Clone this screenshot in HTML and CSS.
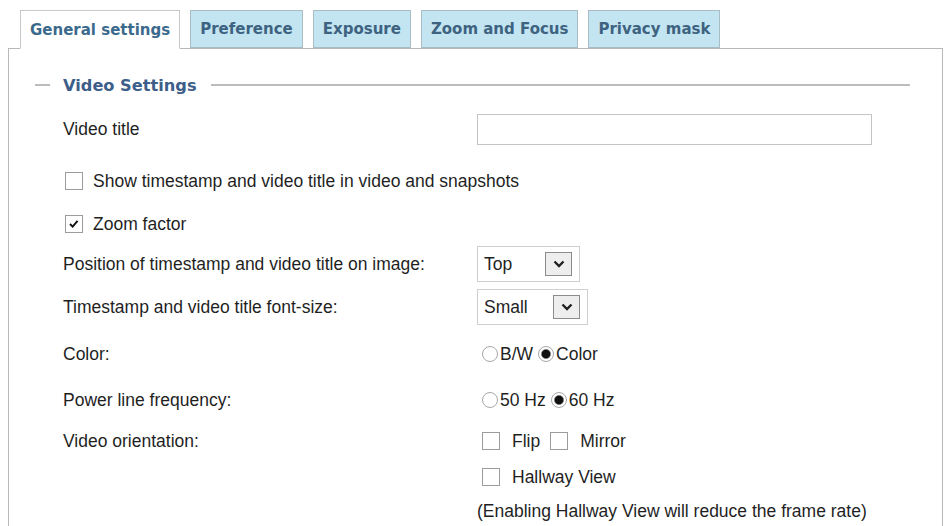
FILE: index.html
```html
<!DOCTYPE html>
<html>
<head>
<meta charset="utf-8">
<link rel="stylesheet" href="styles.css">
</head>
<body>
<div class="page">
  <div class="tabs">
    <div class="tab active">General settings</div>
    <div class="tab">Preference</div>
    <div class="tab">Exposure</div>
    <div class="tab">Zoom and Focus</div>
    <div class="tab">Privacy mask</div>
  </div>
  <div class="panel">
    <div class="legend">
      <span class="dash"></span>
      <span class="legend-text">Video Settings</span>
      <span class="rule"></span>
    </div>
    <div class="form">
      <div class="row row-title">
        <span class="label">Video title</span>
        <div class="textbox"></div>
      </div>
      <div class="row row-show">
        <span class="cb cb-lead"></span>
        <span>Show timestamp and video title in video and snapshots</span>
      </div>
      <div class="row row-zoom">
        <span class="cb cb-lead checked"><svg viewBox="0 0 18 18" width="16" height="16"><path d="M4.5 9 L7.5 12 L13 5.5" fill="none" stroke="#111" stroke-width="2.2"/></svg></span>
        <span>Zoom factor</span>
      </div>
      <div class="row row-position">
        <span class="label">Position of timestamp and video title on image:</span>
        <div class="select select-top">
          <span>Top</span>
          <span class="sel-btn"><svg viewBox="0 0 12 8" width="12" height="8"><path d="M1.5 1.5 L6 6 L10.5 1.5" fill="none" stroke="#222" stroke-width="2.4"/></svg></span>
        </div>
      </div>
      <div class="row row-size">
        <span class="label">Timestamp and video title font-size:</span>
        <div class="select select-small">
          <span>Small</span>
          <span class="sel-btn"><svg viewBox="0 0 12 8" width="12" height="8"><path d="M1.5 1.5 L6 6 L10.5 1.5" fill="none" stroke="#222" stroke-width="2.4"/></svg></span>
        </div>
      </div>
      <div class="row row-color">
        <span class="label">Color:</span>
        <div class="opts">
          <span class="radio"></span><span class="opt-text">B/W</span>
          <span class="radio checked"></span><span class="opt-text">Color</span>
        </div>
      </div>
      <div class="row row-power">
        <span class="label">Power line frequency:</span>
        <div class="opts">
          <span class="radio"></span><span class="opt-text">50 Hz</span>
          <span class="radio checked"></span><span class="opt-text">60 Hz</span>
        </div>
      </div>
      <div class="row row-orient">
        <span class="label">Video orientation:</span>
        <div class="opts">
          <span class="cb"></span><span class="cb-text">Flip</span>
          <span class="cb"></span><span class="cb-text">Mirror</span>
        </div>
      </div>
      <div class="row row-hallway">
        <span class="label"></span>
        <div class="opts">
          <span class="cb"></span><span class="cb-text">Hallway View</span>
        </div>
      </div>
      <div class="row row-note">
        <span class="label"></span>
        <span>(Enabling Hallway View will reduce the frame rate)</span>
      </div>
    </div>
  </div>
</div>
</body>
</html>
```

FILE: styles.css
```css
html, body {
  margin: 0;
  padding: 0;
  background: #fff;
  overflow: hidden;
}
body {
  font-family: "Liberation Sans", Arial, sans-serif;
  font-size: 17.5px;
  color: #1f1f1f;
}
.page {
  padding: 10px 0 0 8px;
}
.tabs {
  display: flex;
  gap: 10px;
  margin-left: 12px;
  height: 38px;
  position: relative;
  z-index: 1;
}
.tab {
  box-sizing: border-box;
  height: 38px;
  padding: 0 9px;
  display: flex;
  align-items: center;
  font-family: "DejaVu Sans", Verdana, sans-serif;
  font-weight: bold;
  font-size: 15px;
  color: #3e6381;
  background: #c3e5f1;
  border: 1px solid #a9bcc6;
}
.tab.active {
  height: 39px;
  background: #fff;
  color: #3b6a8c;
  border-color: #c9c9c9;
  border-bottom-color: #fff;
}
.panel {
  width: 935px;
  height: 480px;
  box-sizing: border-box;
  border: 1px solid #b8b8b8;
  border-bottom: none;
  padding-top: 21px;
}
.legend {
  height: 30px;
  display: flex;
  align-items: center;
  padding: 0 32px 0 26px;
}
.dash {
  width: 15px;
  height: 2px;
  background: #bcbcbc;
  margin-right: 13px;
}
.legend-text {
  font-family: "DejaVu Sans", Verdana, sans-serif;
  font-weight: bold;
  font-size: 16.2px;
  color: #3d5e89;
  margin-right: 14px;
}
.rule {
  flex: 1;
  height: 2px;
  background: #bcbcbc;
}
.form {
  padding-left: 54px;
}
.row {
  display: flex;
  align-items: center;
}
.row-title { height: 58px; }
.row-show { height: 46px; }
.row-zoom { height: 40px; }
.row-position { height: 40px; }
.row-size { height: 46px; }
.row-color { height: 48px; }
.row-power { height: 44px; }
.row-orient { height: 38px; }
.row-hallway { height: 34px; }
.row-note { height: 34px; }
.label {
  width: 414px;
  flex-shrink: 0;
}
.textbox {
  width: 395px;
  height: 31px;
  box-sizing: border-box;
  border: 1px solid #c4c4c4;
  background: #fff;
}
.cb {
  width: 18px;
  height: 18px;
  box-sizing: border-box;
  border: 1px solid #9c9c9c;
  background: #fff;
  display: inline-flex;
  align-items: center;
  justify-content: center;
  flex-shrink: 0;
}
.cb-lead {
  margin-left: 2px;
  margin-right: 10px;
}
.cb-text {
  margin-left: 12px;
  margin-right: 10px;
}
.opts {
  display: flex;
  align-items: center;
  margin-left: 5px;
}
.radio {
  width: 16px;
  height: 16px;
  box-sizing: border-box;
  border-radius: 50%;
  border: 1px solid #a8a8a8;
  background: #fff;
  flex-shrink: 0;
}
.radio.checked {
  background: radial-gradient(circle, #111 0 3.8px, #777 4.5px, #fff 5.3px);
}
.opt-text {
  margin-left: 2px;
  margin-right: 5px;
}
.select {
  height: 36px;
  box-sizing: border-box;
  border: 1px solid #cfcfcf;
  display: flex;
  align-items: center;
  padding-left: 6px;
}
.select-top { width: 103px; }
.select-small { width: 111px; }
.sel-btn {
  margin-left: auto;
  margin-right: 7px;
  width: 27px;
  height: 24px;
  box-sizing: border-box;
  border: 1px solid #8c8c8c;
  background: #eeeeee;
  display: flex;
  align-items: center;
  justify-content: center;
}
```
